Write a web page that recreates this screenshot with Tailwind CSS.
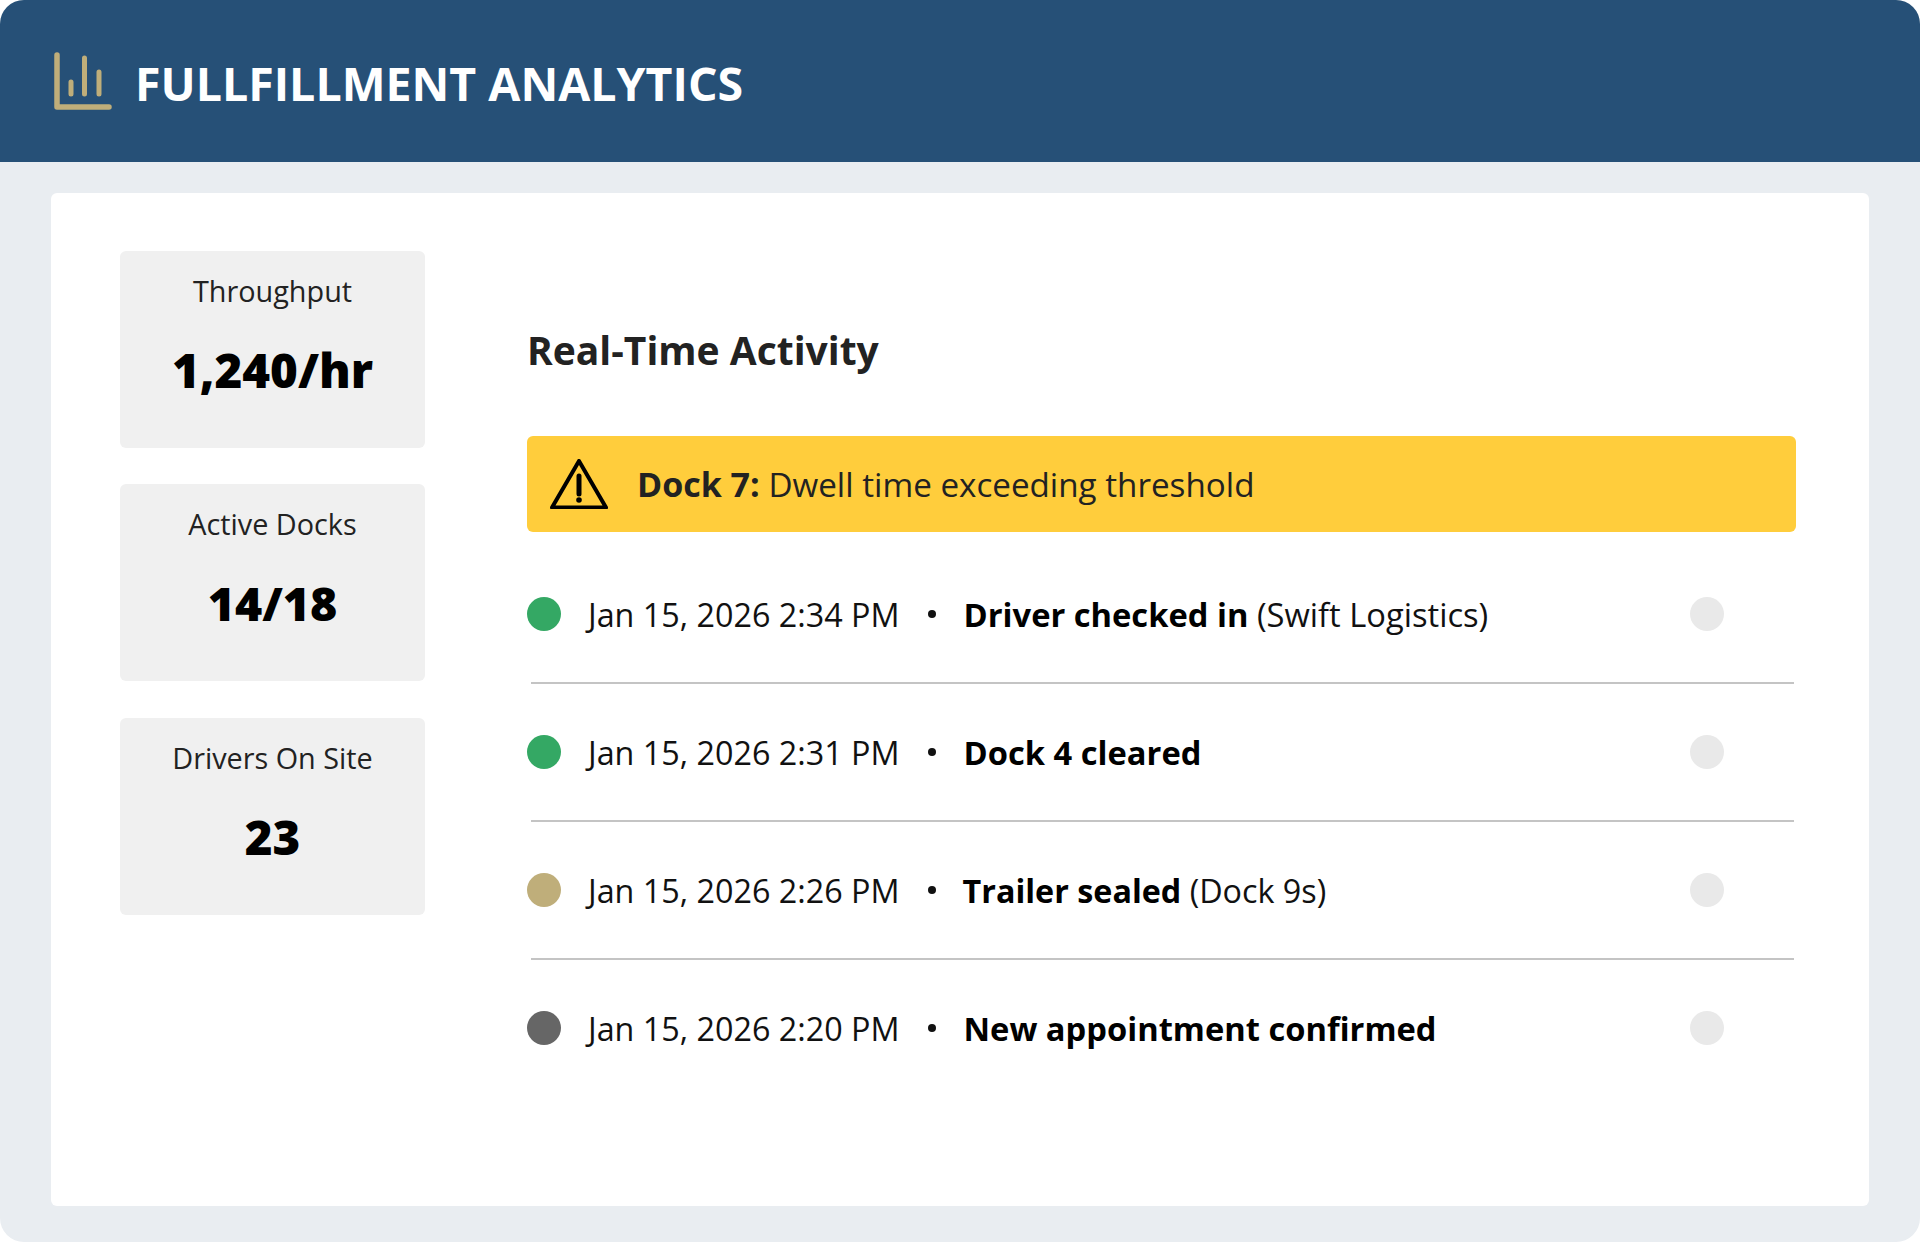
<!DOCTYPE html>
<html>
<head>
<meta charset="utf-8">
<script src="https://cdn.jsdelivr.net/npm/@tailwindcss/browser@4"></script>
</head>
<body class="bg-white">
<div class="w-[1920px] h-[1242px] rounded-[24px] overflow-hidden bg-[#e9edf1] font-['Open_Sans',sans-serif] flex flex-col">
  <header class="h-[162px] bg-[#265077] flex items-center">
    <svg class="ml-[54px] w-[58px] h-[58px] shrink-0" viewBox="0 0 58 58" fill="none" stroke="#bfae7a" stroke-linecap="round" stroke-linejoin="round">
      <path d="M3 3V55H55" stroke-width="5.500"/>
      <path d="M17 30V42M30.500 6V42M45 20V42" stroke-width="5"/>
    </svg>
    <h1 class="ml-[23px] pt-[4px] text-[46.500px] font-bold text-white leading-none">FULLFILLMENT ANALYTICS</h1>
  </header>
  <main class="flex-1 px-[51px] pt-[31px] pb-[36px]">
    <div class="h-full bg-white rounded-[6px] flex pl-[69px] pr-[73px] pt-[58px]">
      <aside class="w-[305px] shrink-0 flex flex-col">
        <div class="h-[197px] bg-[#f0f0f0] rounded-[6px] flex flex-col items-center pt-[21px]">
          <span class="text-[28.800px] leading-[38px] text-[#222]">Throughput</span>
          <span class="mt-[29px] text-[47.500px] leading-[62px] font-extrabold text-black">1,240/hr</span>
        </div>
        <div class="mt-[36px] h-[197px] bg-[#f0f0f0] rounded-[6px] flex flex-col items-center pt-[21px]">
          <span class="text-[28.800px] leading-[38px] text-[#222]">Active Docks</span>
          <span class="mt-[29px] text-[46.500px] leading-[62px] font-extrabold text-black">14/18</span>
        </div>
        <div class="mt-[37px] h-[197px] bg-[#f0f0f0] rounded-[6px] flex flex-col items-center pt-[21px]">
          <span class="text-[28.800px] leading-[38px] text-[#222]">Drivers On Site</span>
          <span class="mt-[29px] text-[47.500px] leading-[62px] font-extrabold text-black">23</span>
        </div>
      </aside>
      <section class="ml-[102px] flex-1 pt-[73px]">
        <h2 class="text-[39px] leading-[52px] font-bold text-[#222]">Real-Time Activity</h2>
        <div class="mt-[60px] h-[96px] bg-[#ffcd3c] rounded-[6px] flex items-center text-[33.200px] text-[#222]">
          <svg class="ml-[23px] w-[58px] h-[50px] shrink-0" viewBox="0 0 58 50" fill="none" stroke="#000" stroke-linecap="round" stroke-linejoin="round">
            <path d="M29 2 L56 48.500 H2 Z" stroke-width="4"/>
            <path d="M29 17V35" stroke-width="5"/>
            <circle cx="29" cy="41" r="2.800" fill="#000" stroke="none"/>
          </svg>
          <p class="ml-[29px]"><b class="font-bold text-[34px]">Dock 7:</b> Dwell time exceeding threshold</p>
        </div>
        <div class="mt-[14px] flex flex-col">
          <div class="h-[136px] flex items-center text-[32.300px] text-[#111]">
            <span class="w-[34px] h-[34px] rounded-full bg-[#34a864] shrink-0"></span>
            <span class="ml-[27px] pt-[1px]">Jan 15, 2026 2:34 PM</span>
            <span class="ml-[28px] w-[8px] h-[8px] rounded-full bg-[#111] shrink-0"></span>
            <p class="ml-[28px] pt-[1px] flex-1 text-[32.700px]"><b class="font-bold text-black">Driver checked in</b> (Swift Logistics)</p>
            <span class="mr-[72px] w-[34px] h-[34px] rounded-full bg-[#e9e9e9] shrink-0"></span>
          </div>
          <div class="h-[2px] ml-[4px] mr-[2px] bg-[#c4c4c4]"></div>
          <div class="h-[136px] flex items-center text-[32.300px] text-[#111]">
            <span class="w-[34px] h-[34px] rounded-full bg-[#34a864] shrink-0"></span>
            <span class="ml-[27px] pt-[1px]">Jan 15, 2026 2:31 PM</span>
            <span class="ml-[28px] w-[8px] h-[8px] rounded-full bg-[#111] shrink-0"></span>
            <p class="ml-[28px] pt-[1px] flex-1 text-[32.700px]"><b class="font-bold text-black">Dock 4 cleared</b></p>
            <span class="mr-[72px] w-[34px] h-[34px] rounded-full bg-[#e9e9e9] shrink-0"></span>
          </div>
          <div class="h-[2px] ml-[4px] mr-[2px] bg-[#c4c4c4]"></div>
          <div class="h-[136px] flex items-center text-[32.300px] text-[#111]">
            <span class="w-[34px] h-[34px] rounded-full bg-[#bfae7a] shrink-0"></span>
            <span class="ml-[27px] pt-[1px]">Jan 15, 2026 2:26 PM</span>
            <span class="ml-[28px] w-[8px] h-[8px] rounded-full bg-[#111] shrink-0"></span>
            <p class="ml-[27px] pt-[1px] flex-1 text-[32.300px]"><b class="font-bold text-black">Trailer sealed</b> (Dock 9s)</p>
            <span class="mr-[72px] w-[34px] h-[34px] rounded-full bg-[#e9e9e9] shrink-0"></span>
          </div>
          <div class="h-[2px] ml-[4px] mr-[2px] bg-[#c4c4c4]"></div>
          <div class="h-[136px] flex items-center text-[32.300px] text-[#111]">
            <span class="w-[34px] h-[34px] rounded-full bg-[#666666] shrink-0"></span>
            <span class="ml-[27px] pt-[1px]">Jan 15, 2026 2:20 PM</span>
            <span class="ml-[28px] w-[8px] h-[8px] rounded-full bg-[#111] shrink-0"></span>
            <p class="ml-[28px] pt-[1px] flex-1 text-[32.700px]"><b class="font-bold text-black">New appointment confirmed</b></p>
            <span class="mr-[72px] w-[34px] h-[34px] rounded-full bg-[#e9e9e9] shrink-0"></span>
          </div>
        </div>
      </section>
    </div>
  </main>
</div>
</body>
</html>
